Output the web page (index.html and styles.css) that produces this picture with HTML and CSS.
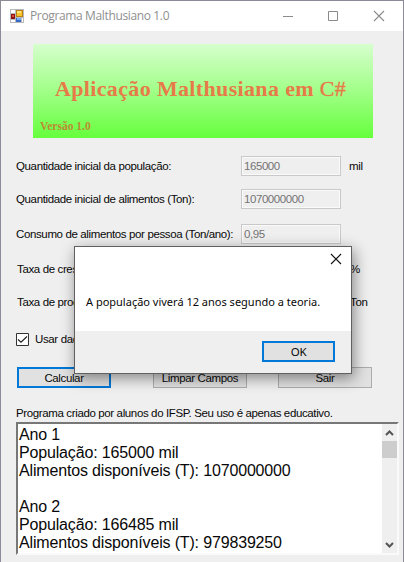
FILE: index.html
```html
<!DOCTYPE html>
<html lang="pt">
<head>
<meta charset="utf-8">
<title>Programa Malthusiano 1.0</title>
<link rel="stylesheet" href="styles.css">
</head>
<body>
<div class="window">
  <header class="titlebar">
    <svg class="app-icon" width="14" height="14" viewBox="0 0 14 14" shape-rendering="crispEdges">
      <path fill="#b9b9bd" d="M0 0h14v14H0z"/>
      <path fill="#fff" d="M1 1h4v3H1zM1 11h4v2H1zM12 9h1v4h-1z"/>
      <path fill="#8e1210" d="M1 5h4v5H1z"/><path fill="#d84b38" d="M2 6h2v2H2z"/>
      <path fill="#b98013" d="M6 1h7v7H6z"/><path fill="#f7c52c" d="M7 2h5v5H7z"/><path fill="#ffe47a" d="M7 2h4v2H7z"/>
      <path fill="#3569c4" d="M6 9h5v4H6z"/><path fill="#76aefa" d="M7 9h4v2H7z"/>
    </svg>
    <span class="title">Programa Malthusiano 1.0</span>
    <svg class="controls" width="104" height="12" viewBox="0 0 104 12" fill="none" stroke="#8b8b8b">
      <path d="M1 6.500h10M46.500 1.500h9v9h-9z"/><path d="M92 1l10 10M102 1l-10 10" stroke-width="1.100"/>
    </svg>
  </header>
  <main class="form">
    <div class="banner">
      <h1>Aplicação Malthusiana em <span>C#</span></h1>
      <p>Versão 1.0</p>
    </div>
    <div class="row r1"><label>Quantidade inicial da população:</label><div class="field">165000</div><span class="unit">mil</span></div>
    <div class="row r2"><label>Quantidade inicial de alimentos (Ton):</label><div class="field">1070000000</div></div>
    <div class="row r3"><label>Consumo de alimentos por pessoa (Ton/ano):</label><div class="field">0,95</div></div>
    <div class="row r4"><label>Taxa de cresc</label><span class="unit">%</span></div>
    <div class="row r5"><label>Taxa de prod</label><span class="unit">Ton</span></div>
    <div class="check">
      <svg width="13" height="13" viewBox="0 0 13 13" fill="none"><path d="M.5.5h12v12H.5z" fill="#fff" stroke="#333"/><path d="M2 6.500l3 2.700 6-5.700" stroke="#222" stroke-width="1.200"/></svg>
      <span>Usar dad</span>
    </div>
    <div class="buttons">
      <div class="btn primary">Calcular</div>
      <div class="btn">Limpar Campos</div>
      <div class="btn">Sair</div>
    </div>
    <p class="credit">Programa criado por alunos do IFSP. Seu uso é apenas educativo.</p>
    <div class="output">
      <div class="lines">
        <p>Ano 1</p><p>População: 165000 mil</p><p>Alimentos disponíveis (T): 1070000000</p><p class="blank"></p>
        <p>Ano 2</p><p>População: 166485 mil</p><p>Alimentos disponíveis (T): 979839250</p>
      </div>
      <div class="scroll">
        <svg width="15" height="17" viewBox="0 0 15 17"><path d="M4 11l3.500-3.500L11 11" fill="none" stroke="#555" stroke-width="2"/></svg>
        <div class="thumb"></div>
        <svg class="down" width="15" height="17" viewBox="0 0 15 17"><path d="M4 7l3.500 3.500L11 7" fill="none" stroke="#555" stroke-width="2"/></svg>
      </div>
    </div>
  </main>
  <section class="dialog">
    <div class="message">
      <svg class="close" width="12" height="12" viewBox="0 0 12 12"><path d="M1 1l10 10M11 1L1 11" stroke="#111" stroke-width="1.100"/></svg>
      <p>A população viverá 12 anos segundo a teoria.</p>
    </div>
    <div class="actions"><div class="btn primary ok">OK</div></div>
  </section>
</div>
</body>
</html>
```
FILE: styles.css
```css
* { box-sizing: border-box; }
body { margin: 0; overflow: hidden; }
p, h1 { margin: 0; }
.window {
  position: relative; width: 404px; height: 562px; overflow: hidden;
  background: #efefef; border: 1px solid #8c8c99; border-bottom: 0;
  font: 11.500px/20px "Liberation Sans", Arial, sans-serif; letter-spacing: -0.37px;
  color: #080808; white-space: nowrap;
}
.titlebar { display: flex; align-items: center; height: 30px; background: #fff; padding: 0 17px 0 9px; }
.title { margin-left: 6px; flex: 1; color: #8f8f8f; font: 12px/20px "Open Sans", sans-serif; letter-spacing: -0.36px; }
.controls { flex: none; }
.form { padding: 13px 4px 0 15px; }
.banner {
  width: 340px; height: 94px; margin-left: 17px;
  background: linear-gradient(#d6ffcd, #a3ff8b 48%, #66ff3d);
  font-family: "Liberation Serif", "Times New Roman", serif; font-weight: bold; letter-spacing: 0;
}
.banner h1 { padding: 32px 0 0 22px; font-size: 22px; line-height: 26px; color: #e67a48; letter-spacing: 0.35px; }
.banner h1 span { font-weight: normal; -webkit-text-stroke: 0.4px #e67a48; }
.banner p { padding: 17px 0 0 7px; font-size: 11.500px; line-height: 14px; color: #bc8b35; }
.row { display: flex; height: 20px; line-height: 20px; }
.row label { width: 225px; }
.r1 { margin-top: 18px; }
.r2 { margin-top: 13px; }
.r3 { margin-top: 15px; }
.r4 { margin-top: 15px; }
.r5 { margin-top: 13px; }
.r4 label, .r5 label { padding-left: 1px; width: 334px; }
.field { width: 100px; height: 20px; border: 1px solid #c9c9c9; box-shadow: inset 0 0 0 1px #fafafa; padding-left: 2px; line-height: 18px; color: #747474; letter-spacing: -0.43px; }
.r1 .unit { margin-left: 8px; }
.check { display: flex; align-items: center; height: 20px; margin-top: 17px; gap: 6px; }
.buttons { display: flex; margin: 18px 0 0 1px; }
.btn { width: 94px; height: 21px; border: 1px solid #adadad; background: #e1e1e1; text-align: center; line-height: 20px; }
.btn.primary { border: 2px solid #0078d7; line-height: 18px; }
.buttons .btn:nth-child(2) { margin-left: 42px; }
.buttons .btn:nth-child(3) { margin-left: 31px; }
.credit { margin-top: 15px; height: 20px; }
.output {
  display: flex; width: 383px; height: 133px; margin-top: -1px;
  border: 2px solid; border-color: #777 #fafafa #fafafa #777; background: #fff;
}
.lines { flex: 1; font: 16px/18px "Liberation Sans", Arial, sans-serif; letter-spacing: -0.16px; padding: 2px 0 0 1px; overflow: hidden; }
.blank { height: 18px; }
.scroll { display: flex; flex-direction: column; width: 15px; background: #efefef; }
.thumb { height: 17px; background: #cdcdcd; }
.scroll .down { margin-top: auto; }
.dialog {
  position: absolute; left: 73px; top: 245px; width: 278px; height: 128px;
  border: 1px solid #606060; background: #efefef; box-shadow: 2px 4px 14px rgba(0,0,0,.45);
}
.message { height: 84px; padding: 6px 9px 0 11px; background: #fff; font: 11px/20px "Noto Sans", sans-serif; letter-spacing: 0; }
.close { display: block; margin-left: auto; }
.message p { padding-top: 27px; }
.actions { display: flex; justify-content: flex-end; padding: 10px 16px 0 0; }
.ok { width: 73px; font: 11.500px/18px "Noto Sans", sans-serif; }
```
